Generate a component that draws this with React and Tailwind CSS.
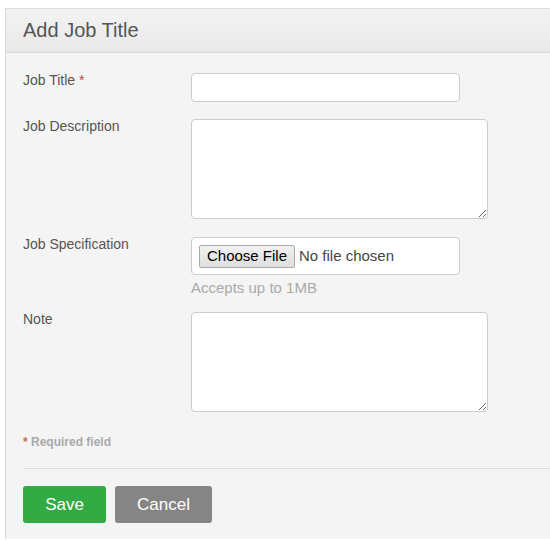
import React from "react";

function FieldRow({ label, required, children, className = "" }) {
  return (
    <div className={"flex items-start " + className}>
      <label className="w-[168px] shrink-0 text-[14px] leading-[20px] text-[#555]">
        {label}
        {required && <span className="text-[#b94a48]"> *</span>}
      </label>
      <div className="mt-[3px]">{children}</div>
    </div>
  );
}

export default function App() {
  return (
    <div className="min-h-[541px] bg-white pt-[8px] pl-[5px] font-[family-name:'Liberation_Sans',Arial,sans-serif]">
      <div className="w-[560px] h-[531px] border border-r-0 border-b-0 border-[#dcdcdc] bg-[#f4f4f4]">
        {/* header */}
        <div className="h-[44px] flex items-center pl-[17px] border-b border-[#dadada] bg-gradient-to-b from-[#f3f3f3] to-[#e8e8e8]">
          <h1 className="text-[20px] text-[#555] leading-none -mt-[1px]">Add Job Title</h1>
        </div>

        <form className="pl-[17px] pt-[17px]">
          <FieldRow label="Job Title" required>
            <input
              type="text"
              className="block w-[269px] h-[29px] bg-white border border-[#ccc] rounded-[4px] px-2 text-[14px]"
            />
          </FieldRow>

          <FieldRow label="Job Description" className="mt-[14px]">
            <textarea className="block w-[297px] h-[100px] bg-white border border-[#ccc] rounded-[4px] p-2 text-[14px] resize" />
          </FieldRow>

          <FieldRow label="Job Specification" className="mt-[15px]">
            <div className="w-[269px] h-[38px] bg-white border border-[#ccc] rounded-[4px] flex items-center pl-[7px]">
              <span className="h-[23px] w-[96px] flex items-center justify-center border border-[#a9a9a9] rounded-[2px] bg-gradient-to-b from-[#f2f2f2] to-[#dedede] text-[15px] text-black">
                Choose File
              </span>
              <span className="ml-[4px] text-[15px] text-[#444]">No file chosen</span>
            </div>
            <p className="mt-[3px] text-[15px] leading-[20px] text-[#aaa]">Accepts up to 1MB</p>
          </FieldRow>

          <FieldRow label="Note" className="mt-[11px]">
            <textarea className="block w-[297px] h-[100px] bg-white border border-[#ccc] rounded-[4px] p-2 text-[14px] resize" />
          </FieldRow>

          <p className="mt-[22px] text-[12px] leading-[16px] font-bold text-[#aaa]">
            <span className="text-[#c0704a]">*</span> Required field
          </p>

          <div className="mt-[18px] border-t border-[#dcdcdc]" />

          <div className="mt-[17px] flex gap-[9px]">
            <button
              type="button"
              className="h-[37px] w-[83px] rounded-[3px] bg-[#32ab45] text-white text-[17px]"
            >
              Save
            </button>
            <button
              type="button"
              className="h-[37px] w-[97px] rounded-[3px] bg-[#858585] text-white text-[17px]"
            >
              Cancel
            </button>
          </div>
        </form>
      </div>
    </div>
  );
}
